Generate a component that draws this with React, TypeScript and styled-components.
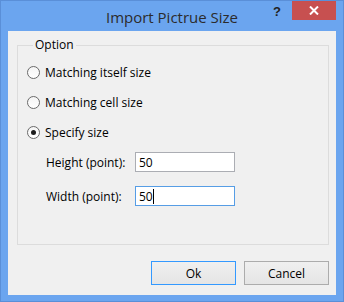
import styled, { createGlobalStyle } from 'styled-components'

const GlobalStyle = createGlobalStyle`
  html, body {
    margin: 0;
    padding: 0;
  }
  body {
    font-family: "Open Sans", "Liberation Sans", sans-serif;
    font-size: 12px;
    color: #000;
  }
`

const Window = styled.div`
  width: 344px;
  height: 302px;
  box-sizing: border-box;
  background: #6ba5ef;
  border: 1px solid #5a8fd8;
  display: flex;
  flex-direction: column;
  padding: 0 7px 6px;
`

const TitleBar = styled.div`
  height: 30px;
  display: grid;
  grid-template-columns: 1fr auto 1fr;
  align-items: start;
`

const Title = styled.div`
  grid-column: 2;
  font-size: 15px;
  color: #2b2b2b;
  padding-top: 7px;
  line-height: 18px;
`

const Controls = styled.div`
  grid-column: 3;
  justify-self: end;
  display: flex;
  align-items: flex-start;
`

const HelpButton = styled.span`
  font-family: "Liberation Sans", sans-serif;
  font-weight: 700;
  font-size: 13px;
  color: #222;
  margin: 4px 11px 0 0;
  line-height: 14px;
`

const CloseButton = styled.div`
  width: 44px;
  height: 19px;
  background: #c75050;
  display: flex;
  align-items: center;
  justify-content: center;
`

const Body = styled.div`
  flex: 1;
  background: #f0f0f0;
  display: flex;
  flex-direction: column;
  padding: 6px 7px 10px 9px;
`

const Group = styled.fieldset`
  margin: 0;
  padding: 4px 0 0 9px;
  border: 1px solid #dcdcdc;
  height: 208px;
  box-sizing: border-box;
  display: flex;
  flex-direction: column;
`

const Legend = styled.legend`
  padding: 0 2px;
  margin-left: 6px;
  font-size: 12px;
  line-height: 16px;
`

const RadioRow = styled.label`
  display: flex;
  align-items: center;
  gap: 5px;
  height: 30px;
`

const RadioCircle = styled.span<{ $checked?: boolean }>`
  width: 11px;
  height: 11px;
  border-radius: 50%;
  border: 1px solid #6a6a6a;
  background: linear-gradient(#f4f4f4, #ffffff);
  display: flex;
  align-items: center;
  justify-content: center;
  &::after {
    content: '';
    display: ${(p) => (p.$checked ? 'block' : 'none')};
    width: 5px;
    height: 5px;
    border-radius: 50%;
    background: #1c1c1c;
  }
`

const Fields = styled.div`
  display: grid;
  grid-template-columns: 89px 100px;
  row-gap: 14px;
  align-items: center;
  padding: 5px 0 0 19px;
`

const TextBox = styled.div<{ $focused?: boolean }>`
  height: 20px;
  box-sizing: border-box;
  background: #fff;
  border: 1px solid ${(p) => (p.$focused ? '#569de5' : '#abadb3')};
  padding: 0 3px;
  display: flex;
  align-items: center;
`

const Caret = styled.span`
  width: 1px;
  height: 15px;
  background: #000;
`

const Footer = styled.div`
  display: flex;
  justify-content: flex-end;
  gap: 8px;
  margin-top: auto;
`

const Button = styled.button<{ $default?: boolean }>`
  width: 85px;
  height: 24px;
  font-family: inherit;
  font-size: 12px;
  color: #000;
  background: linear-gradient(#f0f0f0, #e5e5e5);
  border: 1px solid ${(p) => (p.$default ? '#3399ff' : '#acacac')};
  padding: 0;
`

const options = [
  { label: 'Matching itself size', checked: false },
  { label: 'Matching cell size', checked: false },
  { label: 'Specify size', checked: true },
]

export default function App() {
  return (
    <>
      <GlobalStyle />
      <Window>
        <TitleBar>
          <Title>Import Pictrue Size</Title>
          <Controls>
            <HelpButton>?</HelpButton>
            <CloseButton>
              <svg width="10" height="9" viewBox="0 0 10 9">
                <path d="M1 0.5 L9 8.5 M9 0.5 L1 8.5" stroke="#fff" strokeWidth="2" />
              </svg>
            </CloseButton>
          </Controls>
        </TitleBar>
        <Body>
          <Group>
            <Legend>Option</Legend>
            {options.map((o) => (
              <RadioRow key={o.label}>
                <RadioCircle $checked={o.checked} />
                {o.label}
              </RadioRow>
            ))}
            <Fields>
              <span>Height (point):</span>
              <TextBox>50</TextBox>
              <span>Width (point):</span>
              <TextBox $focused>
                50
                <Caret />
              </TextBox>
            </Fields>
          </Group>
          <Footer>
            <Button $default>Ok</Button>
            <Button>Cancel</Button>
          </Footer>
        </Body>
      </Window>
    </>
  )
}
